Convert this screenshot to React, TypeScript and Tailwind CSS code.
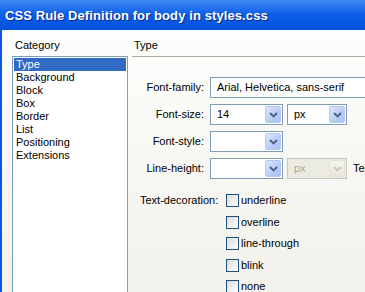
import * as React from 'react';

const categories = ['Type', 'Background', 'Block', 'Box', 'Border', 'List', 'Positioning', 'Extensions'];
const decorations = ['underline', 'overline', 'line-through', 'blink', 'none'];

// XP style combo button
function DropButton({ disabled }: { disabled?: boolean }) {
  return (
    <div
      className={
        disabled
          ? 'flex h-[17px] w-[16px] items-center justify-center rounded-[2px] border border-[#e4e2d6] bg-gradient-to-b from-[#f4f3ee] to-[#e8e6dc]'
          : 'flex h-[17px] w-[16px] items-center justify-center rounded-[2px] border border-[#b6c8f3] bg-gradient-to-br from-[#dbe6fd] via-[#bdd0f8] to-[#a6bff2]'
      }
    >
      <svg width="9" height="6" viewBox="0 0 9 6">
        <polyline
          points="1,1 4.5,4.5 8,1"
          fill="none"
          stroke={disabled ? '#c9c7ba' : '#4d6185'}
          strokeWidth="1.8"
        />
      </svg>
    </div>
  );
}

function Select({ width, value, disabled }: { width: string; value?: string; disabled?: boolean }) {
  return (
    <div
      className={`flex h-[21px] ${width} items-center justify-between border pl-[6px] pr-[1px] ${
        disabled ? 'border-[#c9c7ba] bg-[#ecebe2] text-[#aca899]' : 'border-[#7f9db9] bg-white'
      }`}
    >
      <span>{value}</span>
      <DropButton disabled={disabled} />
    </div>
  );
}

function Label({ children }: { children: React.ReactNode }) {
  return <div className="w-[78px] shrink-0 pr-[6px] text-right">{children}</div>;
}

export default function App() {
  return (
    <div className="flex h-[292px] w-[365px] flex-col overflow-hidden text-[11px] leading-[13px] text-black [font-family:'Liberation_Sans',Arial,sans-serif]">
      {/* Title bar */}
      <div className="flex h-[30px] shrink-0 items-center bg-gradient-to-b from-[#3d8af5] via-[#0a5ce8] to-[#0452dc] pl-[5px]">
        <span className="text-[13px] font-bold tracking-[0.1px] text-white [text-shadow:1px_1px_0_#0a2a8a]">
          CSS Rule Definition for body in styles.css
        </span>
      </div>

      {/* Body */}
      <div className="flex flex-1 border-l-2 border-[#0b56e2] bg-gradient-to-b from-[#fdfdfc] to-[#f2f1ea]">
        {/* Category column */}
        <div className="flex w-[126px] shrink-0 flex-col pl-[10px]">
          <div className="mt-[9px] h-[13px] pl-[3px]">Category</div>
          <div className="mt-[4px] flex-1 border border-[#7f9db9] bg-white p-[1px]">
            {categories.map((c, i) => (
              <div
                key={c}
                className={`h-[13px] pl-[2px] ${i === 0 ? 'bg-[#316ac5] text-white' : ''}`}
              >
                {c}
              </div>
            ))}
          </div>
        </div>

        {/* Panel */}
        <div className="ml-[4px] flex flex-1 flex-col">
          <div className="mt-[9px] h-[13px] pl-[2px]">Type</div>
          <div className="mt-[4px] h-[2px] border-t border-[#aca899] border-b-white" />

          <div className="mt-[19px] flex flex-col gap-[6px]">
            <div className="flex items-center">
              <Label>Font-family:</Label>
              <div className="flex h-[21px] w-[200px] shrink-0 items-center border border-[#7f9db9] bg-white pl-[6px]">
                Arial, Helvetica, sans-serif
              </div>
            </div>
            <div className="flex items-center">
              <Label>Font-size:</Label>
              <Select width="w-[73px]" value="14" />
              <div className="ml-[4px]">
                <Select width="w-[60px]" value="px" />
              </div>
            </div>
            <div className="flex items-center">
              <Label>Font-style:</Label>
              <Select width="w-[73px]" />
            </div>
            <div className="flex items-center">
              <Label>Line-height:</Label>
              <Select width="w-[73px]" />
              <div className="ml-[4px]">
                <Select width="w-[60px]" value="px" disabled />
              </div>
              <span className="ml-[6px] whitespace-nowrap">Text</span>
            </div>
          </div>

          <div className="mt-[11px] flex">
            <div className="w-[94px] shrink-0 pt-[4px] pl-[8px]">Text-decoration:</div>
            <div className="flex flex-col">
              {decorations.map((d) => (
                <div key={d} className="flex h-[21.5px] items-center">
                  <div className="h-[13px] w-[13px] border border-[#1c5180] bg-gradient-to-br from-[#dcdbd5] to-white" />
                  <span className="ml-[2px]">{d}</span>
                </div>
              ))}
            </div>
          </div>
        </div>
      </div>
    </div>
  );
}
